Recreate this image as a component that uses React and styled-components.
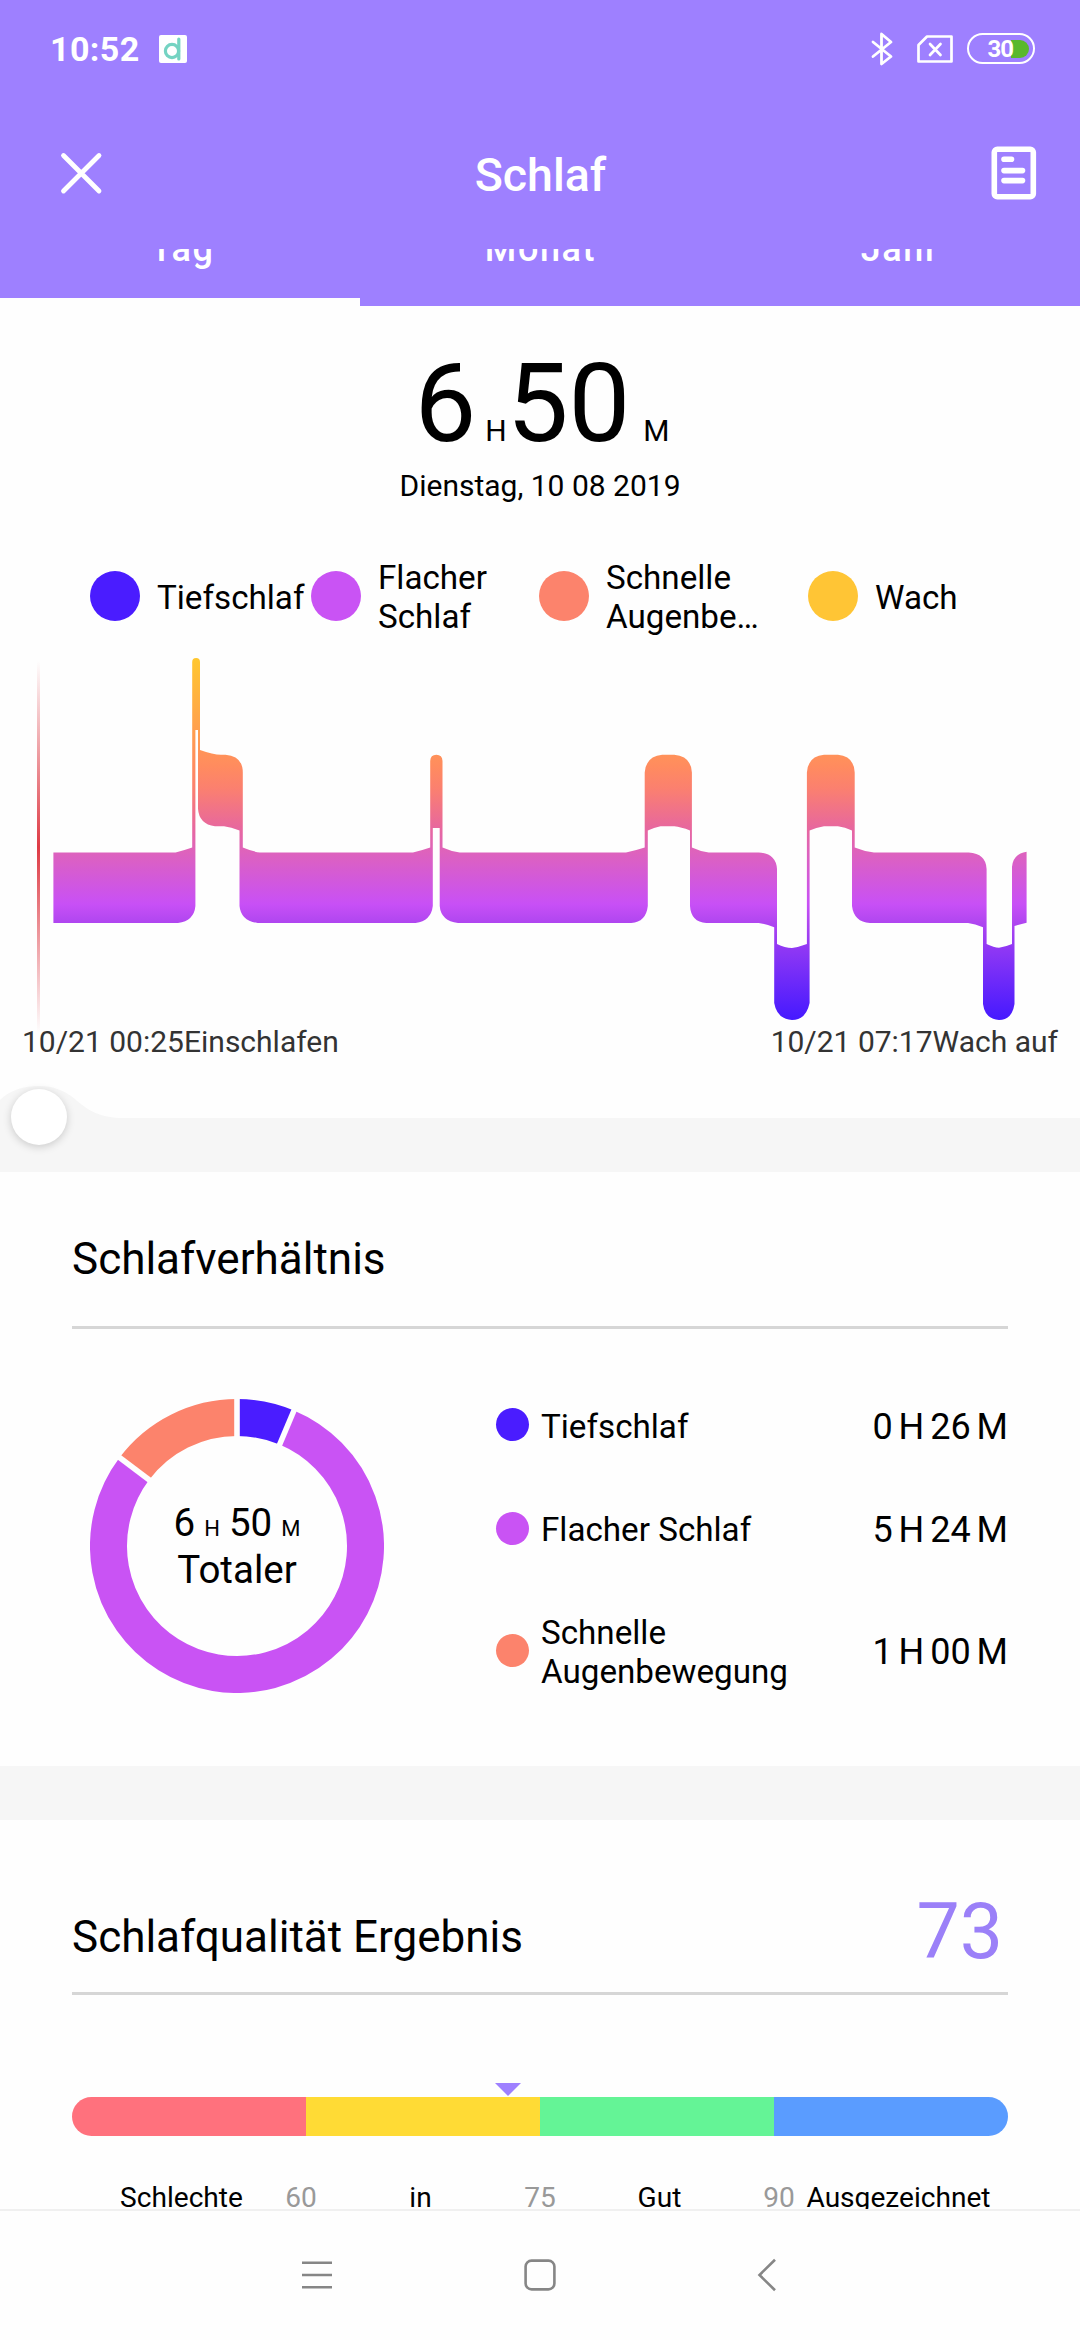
import React from "react";
import styled, { createGlobalStyle } from "styled-components";

const C = {
  accent: "#9e80ff",
  page: "#fefefe",
  band: "#f6f6f6",
  deep: "#4a1cff",
  light: "#c953f4",
  rem: "#fc836c",
  awake: "#ffc535",
};

const Global = createGlobalStyle`
  * { box-sizing: border-box; }
  body { margin: 0; background: ${C.page}; font-family: Roboto, "Noto Sans", sans-serif; color: #000; }
  svg { display: block; flex: none; }
`;

const Phone = styled.div`
  width: 1080px;
  height: 2340px;
  display: flex;
  flex-direction: column;
  overflow: hidden;
  background: ${C.page};
`;

const Header = styled.header`
  height: 306px;
  flex: none;
  background: ${C.accent};
  color: #fff;
`;

const StatusBar = styled.div`
  height: 97px;
  padding: 0 45px 0 50px;
  display: flex;
  align-items: center;
`;

const Clock = styled.span`
  font-size: 34px;
  font-weight: 700;
  line-height: 40px;
  width: 109px;
  letter-spacing: 0.4px;
`;

const StatusIcons = styled.div`
  margin-left: auto;
  display: flex;
  align-items: center;
`;

const SimIcon = styled.svg`
  margin-left: 24px;
`;

const Battery = styled.div`
  width: 68px;
  height: 31px;
  margin-left: 14px;
  border: 2.5px solid #fff;
  border-radius: 16px;
  padding: 3.5px 4px;
  display: flex;
  justify-content: flex-end;
  align-items: center;
`;

const BatteryText = styled.span`
  font-size: 24px;
  font-weight: 700;
  line-height: 20px;
  letter-spacing: -1px;
  margin-right: -2px;
  z-index: 1;
`;

const BatteryFill = styled.span`
  width: 18px;
  height: 18px;
  border-radius: 0 9px 9px 0;
  background: #59b82c;
`;

const AppBar = styled.div`
  height: 152px;
  padding: 0 43px 0 59px;
  display: grid;
  grid-template-columns: 46px 1fr 46px;
  align-items: center;
`;

const Title = styled.h1`
  margin: 0;
  padding: 4px 15px 0 0;
  text-align: center;
  font-size: 46.5px;
  font-weight: 500;
  line-height: 54px;
`;

const Tabs = styled.nav`
  height: 57px;
  display: grid;
  grid-template-columns: repeat(3, 360px);
  overflow: hidden;
`;

const Tab = styled.div`
  height: 57px;
  border-bottom: 8px solid ${(p) => (p.$active ? C.page : "transparent")};
  text-align: center;
  font-size: 36px;
  font-weight: 500;
  line-height: 36px;
  letter-spacing: 1.6px;
`;

const TabText = styled.div`
  margin-top: -18px;
  padding-left: ${(p) => p.$shift || 0}px;
`;

const Scroll = styled.main`
  flex: 1;
  min-height: 0;
  overflow: hidden;
`;

const Hero = styled.section`
  position: relative;
  height: 812px;
  padding-top: 43px;
`;

const Duration = styled.div`
  display: flex;
  justify-content: center;
  align-items: baseline;
  height: 110px;
  line-height: 110px;
  padding-left: 4px;
`;

const Big = styled.span`
  font-size: 110px;
`;

const Unit = styled.span`
  font-size: 30px;
  margin-left: ${(p) => p.$left}px;
`;

const DateText = styled.div`
  margin-top: 9px;
  text-align: center;
  font-size: 30px;
  line-height: 36px;
`;

const Legend = styled.div`
  margin: 54px 0 0 90px;
  height: 78px;
  display: grid;
  grid-template-columns: 221px 228px 269px 200px;
  align-items: center;
`;

const LegendItem = styled.div`
  display: flex;
  align-items: center;
`;

const LegendText = styled.span`
  font-size: 33.2px;
  line-height: 39px;
  margin-left: 17px;
`;

const Dot = styled.span`
  width: ${(p) => p.$size}px;
  height: ${(p) => p.$size}px;
  flex: none;
  margin-bottom: 3px;
  border-radius: 50%;
  background: ${(p) => p.$color};
`;

const Chart = styled.svg`
  overflow: visible;
`;

const ChartTimes = styled.div`
  display: flex;
  justify-content: space-between;
  padding: 0 22px;
  font-size: 30px;
  line-height: 36px;
  color: #333;
`;

const Bump = styled.svg`
  position: absolute;
  left: 0;
  bottom: 0;
`;

const Knob = styled.div`
  position: absolute;
  left: 10.5px;
  bottom: -27px;
  width: 56px;
  height: 56px;
  border-radius: 50%;
  background: #fff;
  box-shadow: 0 2px 9px rgba(0, 0, 0, 0.18);
`;

const Band = styled.div`
  height: 54px;
  background: ${C.band};
`;

const Card = styled.section`
  height: ${(p) => p.$h}px;
  padding: 0 72px;
`;

const CardHead = styled.div`
  height: ${(p) => p.$h}px;
  padding-top: ${(p) => p.$top}px;
  border-bottom: 3px solid #d6d6d6;
  display: flex;
  align-items: center;
  justify-content: space-between;
`;

const CardTitle = styled.h2`
  margin: 0;
  font-size: 44px;
  font-weight: 400;
  line-height: 52px;
  padding-top: ${(p) => p.$drop || 0}px;
`;

const Score = styled.span`
  font-size: 77px;
  line-height: 80px;
  margin: 0 5px 6px 0;
  color: #9b80f8;
`;

const Ratio = styled.div`
  display: flex;
  padding: 70px 0 0 18px;
`;

const Donut = styled.div`
  width: 294px;
  height: 294px;
  display: grid;
  > * { grid-area: 1 / 1; }
`;

const DonutLabel = styled.div`
  display: flex;
  flex-direction: column;
  align-items: center;
  justify-content: center;
  font-size: 38.5px;
  line-height: 47px;
  text-align: center;
`;

const DonutTime = styled.div`
  display: flex;
  align-items: baseline;
  height: 47px;
`;

const SmallUnit = styled.span`
  font-size: 22px;
  margin: 0 ${(p) => p.$right || 0}px 0 9px;
`;

const Stages = styled.div`
  flex: 1;
  margin: 6.5px 0 0 112px;
  display: flex;
  flex-direction: column;
  gap: 62.5px;
`;

const Stage = styled.div`
  display: flex;
  align-items: center;
`;

const StageName = styled.span`
  flex: 1;
  margin-left: 12px;
  font-size: 33.2px;
  line-height: 39px;
`;

const StageTime = styled.span`
  font-size: 36px;
  line-height: 39px;
  padding-top: 2px;
  word-spacing: -3px;
  white-space: nowrap;
`;

const Marker = styled.div`
  width: 26px;
  height: 13px;
  margin: 88px 0 1px 423px;
  background: ${C.accent};
  clip-path: polygon(0 0, 100% 0, 50% 100%);
`;

const Scale = styled.div`
  height: 39px;
  display: flex;
  border-radius: 20px;
  overflow: hidden;
`;

const ScalePart = styled.div`
  flex: 1;
  background: ${(p) => p.$color};
`;

const ScaleLabels = styled.div`
  margin-top: 44px;
  display: flex;
  font-size: 28.1px;
  line-height: 36px;
`;

const ScaleName = styled.span`
  flex: 1 1 0;
  min-width: 0;
  display: flex;
  justify-content: center;
`;

const ScaleLimit = styled.span`
  width: 20px;
  flex: none;
  display: flex;
  justify-content: center;
  color: #999;
`;

const NavBar = styled.footer`
  height: 131px;
  flex: none;
  border-top: 2px solid #f0f0f0;
  padding: 0 0 1px 300px;
  display: flex;
  align-items: center;
`;

const NavIcon = styled.svg`
  width: 34px;
  height: 34px;
  margin-right: ${(p) => p.$gap || 0}px;
  fill: none;
  stroke: #868686;
  stroke-width: 2.6;
`;

const stages = [
  { name: "Tiefschlaf", time: "0 H 26 M", color: C.deep },
  { name: "Flacher Schlaf", time: "5 H 24 M", color: C.light },
  { name: <>Schnelle<br />Augenbewegung</>, time: "1 H 00 M", color: C.rem },
];

const legend = [
  { name: "Tiefschlaf", color: C.deep },
  { name: <>Flacher<br />Schlaf</>, color: C.light },
  { name: <>Schnelle<br />Augenbe…</>, color: C.rem },
  { name: "Wach", color: C.awake },
];

const hypnogram = `M53.4 852.5H175.6Q184 850.5 192.2 847.6V662Q192.2 658 196.1 658Q200 658 200 662V750
Q213 754.7 221 754.7H225.5Q242.8 756 242.8 772.6V847.6Q252 851.5 260 852.5H413Q422 850.5 430.2 847.6V761
Q430.5 754.7 436.3 754.7Q442.3 754.7 442.5 761V847.6Q451 851.5 459.7 852.5H626Q636 850.5 644.7 847.6V772.6
Q646 756 662.2 754.7H674.3Q691 756 691.9 772.6V847.6Q700 851.5 708.7 852.5H758.7Q776 853.5 777 869V944
Q785 947.8 792 948Q799 947 806.9 944V772.6Q808 756 824 754.7H837.9Q854 756 854.7 772.6V847.6Q864 851.5 874 852.5
H968.7Q986 853.5 986.6 869V944Q994 947.5 999 947.8Q1005 947 1012 944V867Q1013 854 1026.6 851.8V922.7L1014.5 926
V1004Q1012 1020 999 1020Q985 1019 983 1004V927.2Q975 924 968 923H869.9Q854 922 852 906V830.4
Q845 827 837.9 826.3H824Q816 827.5 809.6 830.4V1003Q806 1020 792 1020Q777 1019 774.2 1003V927.2Q766 924 758.7 923
H706.3Q691 922 690 906V830.4Q681 827 674.3 826.3H660.5Q654 827.5 647.8 830.4V906Q646 922 631.3 923H458
Q441 921 439.7 906V828H432.8V906Q431 921 415.6 923H257.6Q241 921 239.5 906V830.4Q231 827 224 826.3H215
Q199 824 198 808.7V730H195.4V906Q194 921 178 923H53.4Z`;

const rad = (deg) => (deg * Math.PI) / 180;
const polar = (r, deg) => `${147 + r * Math.sin(rad(deg))} ${147 - r * Math.cos(rad(deg))}`;
const ring = (from, to) =>
  `M${polar(128.5, from)}A128.5 128.5 0 ${to - from > 180 ? 1 : 0} 1 ${polar(128.5, to)}`;

export default function App() {
  return (
    <Phone>
      <Global />
      <Header>
        <StatusBar>
          <Clock>10:52</Clock>
          <svg width="28" height="28" viewBox="0 0 28 28">
            <rect width="28" height="28" rx="2" fill="#fff" />
            <circle cx="13" cy="16" r="6.6" fill="none" stroke="#74d3c2" strokeWidth="3.2" />
            <path d="M19.8 4v20" stroke="#74d3c2" strokeWidth="3.2" strokeLinecap="round" />
          </svg>
          <StatusIcons>
            <svg width="22" height="34" viewBox="0 0 22 34" fill="none" stroke="#fff" strokeWidth="2.8" strokeLinejoin="round" strokeLinecap="round">
              <path d="M2 10L20 24.5L10.5 32V2L20 10L2 24.5" />
            </svg>
            <SimIcon width="36" height="28" viewBox="0 0 36 28" fill="none" stroke="#fff" strokeWidth="2.7" strokeLinejoin="round" strokeLinecap="round">
              <path d="M10 1.5H34.5V26.5H1.5V10Z" />
              <path d="M13 9L23.5 20M23.5 9L13 20" />
            </SimIcon>
            <Battery>
              <BatteryText>30</BatteryText>
              <BatteryFill />
            </Battery>
          </StatusIcons>
        </StatusBar>
        <AppBar>
          <svg width="44" height="44" viewBox="0 0 44 44" stroke="#fff" strokeWidth="4.8" strokeLinecap="round">
            <path d="M4.5 4.5L40 40M40 4.5L4.5 40" />
          </svg>
          <Title>Schlaf</Title>
          <svg width="46" height="54" viewBox="0 0 46 54" fill="none" stroke="#fff" strokeWidth="5.6" strokeLinecap="round">
            <rect x="3.3" y="3.3" width="39" height="47.4" rx="3" />
            <path d="M13 13.2H20.5M13 24.6H31.5M13 34.6H31.5" />
          </svg>
        </AppBar>
        <Tabs>
          <Tab $active><TabText $shift={5}>Tag</TabText></Tab>
          <Tab><TabText $shift={1}>Monat</TabText></Tab>
          <Tab><TabText $shift={0}>Jahr</TabText></Tab>
        </Tabs>
      </Header>

      <Scroll>
        <Hero>
          <Duration>
            <Big>6</Big>
            <Unit $left={9}>H</Unit>
            <Big>50</Big>
            <Unit $left={13}>M</Unit>
          </Duration>
          <DateText>Dienstag, 10 08 2019</DateText>
          <Legend>
            {legend.map((l, i) => (
              <LegendItem key={i}>
                <Dot $size={50} $color={l.color} />
                <LegendText>{l.name}</LegendText>
              </LegendItem>
            ))}
          </Legend>
          <Chart width="1080" height="388" viewBox="0 636 1080 388">
            <defs>
              <linearGradient id="depth" gradientUnits="userSpaceOnUse" x1="0" x2="0" y1="658" y2="1020">
                <stop offset="0" stopColor="#ffc72e" />
                <stop offset="0.3" stopColor="#ff8b5f" />
                <stop offset="0.36" stopColor="#fb806f" />
                <stop offset="0.465" stopColor="#e8689c" />
                <stop offset="0.54" stopColor="#dd62be" />
                <stop offset="0.68" stopColor="#c850f6" />
                <stop offset="0.73" stopColor="#b046f0" />
                <stop offset="0.8" stopColor="#9038f4" />
                <stop offset="1" stopColor="#4519ff" />
              </linearGradient>
              <linearGradient id="cursor" x1="0" x2="0" y1="0" y2="1">
                <stop offset="0" stopColor="#de3b45" stopOpacity="0" />
                <stop offset="0.5" stopColor="#de3b45" />
                <stop offset="1" stopColor="#de3b45" stopOpacity="0" />
              </linearGradient>
            </defs>
            <rect x="37" y="661" width="3" height="372" fill="url(#cursor)" />
            <path d={hypnogram} fill="url(#depth)" />
          </Chart>
          <ChartTimes>
            <span>10/21 00:25Einschlafen</span>
            <span>10/21 07:17Wach auf</span>
          </ChartTimes>
          <Bump width="125" height="36" viewBox="0 0 125 36" fill={C.band}>
            <path d="M0 36V18C10 8 24 4 39 4C54 4 64 9 71 14C82 22 92 35 120 36Z" />
          </Bump>
          <Knob />
        </Hero>
        <Band />

        <Card $h={594}>
          <CardHead $h={157} $top={20}>
            <CardTitle>Schlafverhältnis</CardTitle>
          </CardHead>
          <Ratio>
            <Donut>
              <svg width="294" height="294" viewBox="0 0 294 294" fill="none" strokeWidth="37">
                <path d={ring(0, 22.8)} stroke={C.deep} />
                <path d={ring(22.8, 307)} stroke={C.light} />
                <path d={ring(307, 360)} stroke={C.rem} />
                {[0, 22.8, 307].map((a) => (
                  <path key={a} d={`M${polar(106, a)}L${polar(150, a)}`} stroke={C.page} strokeWidth="5.6" />
                ))}
              </svg>
              <DonutLabel>
                <DonutTime>
                  6<SmallUnit $right={9}>H</SmallUnit>50<SmallUnit>M</SmallUnit>
                </DonutTime>
                <span>Totaler</span>
              </DonutLabel>
            </Donut>
            <Stages>
              {stages.map((s) => (
                <Stage key={s.time}>
                  <Dot $size={33} $color={s.color} />
                  <StageName>{s.name}</StageName>
                  <StageTime>{s.time}</StageTime>
                </Stage>
              ))}
            </Stages>
          </Ratio>
        </Card>
        <Band />

        <Card $h={520}>
          <CardHead $h={175} $top={58}>
            <CardTitle $drop={4}>Schlafqualität Ergebnis</CardTitle>
            <Score>73</Score>
          </CardHead>
          <Marker />
          <Scale>
            <ScalePart $color="#ff717d" />
            <ScalePart $color="#ffdb35" />
            <ScalePart $color="#64f496" />
            <ScalePart $color="#5a9cff" />
          </Scale>
          <ScaleLabels>
            <ScaleName>Schlechte</ScaleName>
            <ScaleLimit>60</ScaleLimit>
            <ScaleName>in</ScaleName>
            <ScaleLimit>75</ScaleLimit>
            <ScaleName>Gut</ScaleName>
            <ScaleLimit>90</ScaleLimit>
            <ScaleName>Ausgezeichnet</ScaleName>
          </ScaleLabels>
        </Card>
      </Scroll>

      <NavBar>
        <NavIcon $gap={189} viewBox="0 0 34 34">
          <path d="M2 4.7H32M2 17H32M2 29.3H32" />
        </NavIcon>
        <NavIcon $gap={193} viewBox="0 0 34 34">
          <rect x="2.6" y="2.6" width="28.8" height="28.8" rx="6" />
        </NavIcon>
        <NavIcon viewBox="0 0 34 34">
          <path d="M25 1.8L9.5 17L25 32.2" />
        </NavIcon>
      </NavBar>
    </Phone>
  );
}
